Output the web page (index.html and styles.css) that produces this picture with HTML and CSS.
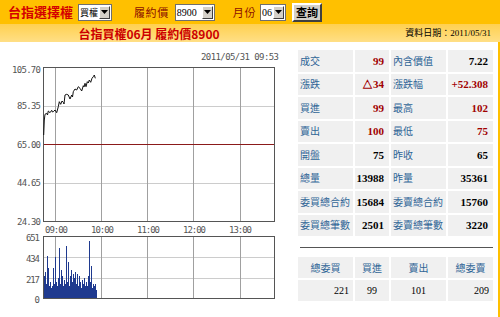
FILE: index.html
```html
<!DOCTYPE html>
<html lang="zh-Hant">

<head>
    <meta charset="UTF-8">
    <title>台指選擇權</title>
    <link rel="stylesheet" href="styles.css">
</head>

<body>
    <div class="bar">
        <span class="title">台指選擇權</span>
        <span class="sel sel-type"><span class="val">買權</span><span class="arrow"><svg width="7" height="4" viewBox="0 0 7 4"><path d="M0 0H7L3.5 4Z" fill="#000"/></svg></span></span>
        <span class="lbl lbl-strike">履約價</span>
        <span class="sel sel-strike"><span class="val num">8900</span><span class="arrow"><svg width="7" height="4" viewBox="0 0 7 4"><path d="M0 0H7L3.5 4Z" fill="#000"/></svg></span></span>
        <span class="lbl lbl-month">月份</span>
        <span class="sel sel-month"><span class="val num">06</span><span class="arrow"><svg width="7" height="4" viewBox="0 0 7 4"><path d="M0 0H7L3.5 4Z" fill="#000"/></svg></span></span>
        <button class="btn">查詢</button>
    </div>

    <div class="sub">
        <div class="caption">台指買權06月 履約價8900</div>
        <div class="date">資料日期：<span class="num">2011/05/31</span></div>
    </div>

    <div class="main">
        <div class="chart">
            <svg width="296" height="275" viewBox="0 0 296 275">
                <g class="txt">
                    <text x="201" y="18" textLength="78">2011/05/31 09:53</text>
                    <text x="41" y="31" text-anchor="end" textLength="29">105.70</text>
                    <text x="41" y="67" text-anchor="end" textLength="24">85.35</text>
                    <text x="41" y="105.5" text-anchor="end" textLength="24">65.00</text>
                    <text x="41" y="143.5" text-anchor="end" textLength="24">44.65</text>
                    <text x="41" y="182.5" text-anchor="end" textLength="24">24.30</text>
                    <text x="45" y="190.5" textLength="23">09:00</text>
                    <text x="91" y="190.5" textLength="23">10:00</text>
                    <text x="137" y="190.5" textLength="23">11:00</text>
                    <text x="183" y="190.5" textLength="23">12:00</text>
                    <text x="229" y="190.5" textLength="23">13:00</text>
                    <text x="40" y="199" text-anchor="end" textLength="14">651</text>
                    <text x="40" y="219.5" text-anchor="end" textLength="14">434</text>
                    <text x="40" y="240.5" text-anchor="end" textLength="14">217</text>
                    <text x="40" y="261" text-anchor="end">0</text>
                </g>

                <!-- 價格圖 -->
                <rect x="43.5" y="25.5" width="231" height="154" fill="#fff" stroke="#555"/>
                <path d="M44 64.5H274M44 141.5H274" stroke="#ccc"/>
                <path d="M55.5 26V179M101.5 26V179M147.5 26V179M193.5 26V179M240.5 26V179" stroke="#a0a0a0"/>
                <path d="M44 102.5H274" stroke="#8b1a1a"/>
                <polyline fill="none" stroke="#111" stroke-width="1"
                    points="43.7,93 44.3,78 45,72.3 46.7,71.3 47.5,73 48.3,69 50,70.7 51.7,68.3 52.5,70 53.3,69.7 55,68 56.7,70.7 58.3,64.7 59.3,59.7 60.7,62.3 62,59 63.3,60.3 64,62 65,53 66.7,52.3 68.3,53 70,57 71.7,53 72.5,55 73.3,49.7 75,47 76.7,48 78.3,44.7 80,46.3 81.7,49 83.3,43.7 84,45 85,41.3 86,44.7 87.3,39.7 88.3,41 89.3,38 90.7,40.3 92,36.3 93.3,34.7 94.3,33 95.3,36.3"/>

                <!-- 成交量 -->
                <rect x="43.5" y="194.5" width="231" height="62" fill="#fff" stroke="#555"/>
                <path d="M44 215.5H274M44 236.5H274" stroke="#ccc"/>
                <path d="M55.5 195V256M101.5 195V256M147.5 195V256M193.5 195V256M240.5 195V256" stroke="#a0a0a0"/>
                <path stroke="#1f3a8f" stroke-width="1"
                    d="M44.5 256V234M45.5 256V230M46.5 256V242M47.5 256V214M48.5 256V226M49.5 256V244M50.5 256V240M51.5 256V246M52.5 256V244M53.5 256V226M54.5 256V242M55.5 256V215M56.5 256V240M57.5 256V244M58.5 256V236M59.5 256V206M60.5 256V242M61.5 256V228M62.5 256V234M63.5 256V244M64.5 256V238M65.5 256V242M66.5 256V204M67.5 256V240M68.5 256V220M69.5 256V244M70.5 256V234M71.5 256V228M72.5 256V240M73.5 256V232M74.5 256V236M75.5 256V230M76.5 256V242M77.5 256V232M78.5 256V244M79.5 256V234M80.5 256V240M81.5 256V246M82.5 256V238M83.5 256V242M84.5 256V236M85.5 256V244M86.5 256V240M87.5 256V244M88.5 256V234M89.5 256V199M90.5 256V240M91.5 256V224M92.5 256V246M93.5 256V242M94.5 256V244M95.5 256V242M96.5 256V248"/>
            </svg>
        </div>

        <div class="panel">
            <table class="quote">
                <colgroup>
                    <col class="c1"><col class="c2"><col class="c3"><col class="c4">
                </colgroup>
                <tr><td class="k">成交</td><td class="v up">99</td><td class="k">內含價值</td><td class="v">7.22</td></tr>
                <tr><td class="k">漲跌</td><td class="v up">△34</td><td class="k">漲跌幅</td><td class="v up">+52.308</td></tr>
                <tr><td class="k">買進</td><td class="v up">99</td><td class="k">最高</td><td class="v up">102</td></tr>
                <tr><td class="k">賣出</td><td class="v up">100</td><td class="k">最低</td><td class="v up">75</td></tr>
                <tr><td class="k">開盤</td><td class="v">75</td><td class="k">昨收</td><td class="v">65</td></tr>
                <tr><td class="k">總量</td><td class="v">13988</td><td class="k">昨量</td><td class="v">35361</td></tr>
                <tr><td class="k">委買總合約</td><td class="v">15684</td><td class="k">委賣總合約</td><td class="v">15760</td></tr>
                <tr><td class="k">委買總筆數</td><td class="v">2501</td><td class="k">委賣總筆數</td><td class="v">3220</td></tr>
            </table>

            <div class="rule"></div>

            <table class="book">
                <colgroup>
                    <col class="c1"><col class="c2"><col class="c3"><col class="c4">
                </colgroup>
                <tr><th>總委買</th><th>買進</th><th>賣出</th><th>總委賣</th></tr>
                <tr><td class="r">221</td><td>99</td><td>101</td><td class="r">209</td></tr>
            </table>
        </div>
    </div>
</body>

</html>
```

FILE: styles.css
```css
body {
    margin: 0;
    background-color: #fff;
    color: #000;
    font-family: "Noto Sans CJK TC", "Liberation Sans", sans-serif;
}

.num {
    font-family: "Liberation Serif", serif;
}

/* barra de busca */
.bar {
    display: flex;
    align-items: center;
    height: 24px;
    padding-left: 8px;
    background-color: #ffc000;
}

.title {
    font-size: 13px;
    font-weight: bold;
    line-height: 16px;
    color: #d40000;
}

.lbl {
    font-size: 11px;
    line-height: 14px;
    letter-spacing: 0.6px;
    color: #8b0f00;
}

.lbl-strike {
    margin-left: 22px;
}

.lbl-month {
    margin-left: 18px;
}

.sel {
    display: flex;
    align-items: center;
    box-sizing: border-box;
    height: 17px;
    margin-left: 5px;
    border: 1px solid #6f6f6f;
    background-color: #fff;
}

.sel-type {
    width: 34px;
}

.sel-strike {
    width: 40px;
    margin-left: 6px;
}

.sel-month {
    width: 26px;
    margin-left: 4px;
}

.sel .val {
    flex: 1;
    padding-left: 1px;
    font-size: 9px;
    line-height: 13px;
    white-space: nowrap;
}

.sel .val.num {
    font-size: 10px;
}

.sel .arrow {
    display: flex;
    align-items: center;
    justify-content: center;
    box-sizing: border-box;
    width: 11px;
    height: 13px;
    margin-right: 1px;
    border: 1px solid;
    border-color: #fff #404040 #404040 #fff;
    background-color: #d4d0c8;
}

.btn {
    box-sizing: border-box;
    width: 30px;
    height: 19px;
    margin-left: 6px;
    padding: 0;
    border: 2px solid;
    border-color: #fff #404040 #404040 #fff;
    background-color: #d4d0c8;
    font-family: "Noto Sans CJK TC", sans-serif;
    font-size: 11px;
    font-weight: bold;
    line-height: 13px;
    color: #000;
}

/* subtitulo */
.sub {
    display: flex;
    align-items: center;
    height: 18px;
    background: linear-gradient(#ffd04f, #ffdf86);
}

.caption {
    width: 298px;
    text-align: center;
    font-size: 12px;
    font-weight: bold;
    line-height: 15px;
    color: #cc0000;
}

.date {
    flex: 1;
    text-align: right;
    padding-right: 9px;
    font-size: 9px;
    line-height: 12px;
}

/* area principal */
.main {
    display: flex;
    border-right: 2px solid #ffc000;
}

.chart svg {
    display: block;
}

.txt text {
    font-family: "DejaVu Sans Mono", monospace;
    font-size: 9px;
    fill: #555;
}

.panel {
    flex: 1;
    padding-top: 6px;
}

table {
    border-collapse: separate;
    border-spacing: 2px;
    width: 199px;
    table-layout: fixed;
}

.c1 { width: 55px; }
.c2 { width: 34px; }
.c3 { width: 55px; }
.c4 { width: 45px; }

.quote td {
    height: 21.5px;
    padding: 0;
    background-color: #f0f0f0;
    white-space: nowrap;
}

.quote .k {
    padding-left: 2px;
    font-size: 10px;
    line-height: 12px;
    color: #2f6596;
}

.quote .v {
    padding-right: 5px;
    text-align: right;
    font-family: "Liberation Serif", serif;
    font-size: 11px;
    font-weight: bold;
    line-height: 12px;
    color: #000;
}

.quote .up {
    color: #a00000;
}

.rule {
    margin: 9px 5px 0 4px;
    border-top: 1px solid #555;
}

.book {
    margin-top: 7px;
}

.book th,
.book td {
    height: 21px;
    padding: 0;
    background-color: #f0f0f0;
    text-align: center;
}

.book th {
    font-size: 10px;
    font-weight: normal;
    line-height: 12px;
    color: #2f6596;
}

.book td {
    font-family: "Liberation Serif", serif;
    font-size: 10px;
    line-height: 12px;
}

.book td.r {
    text-align: right;
    padding-right: 4px;
}
```
